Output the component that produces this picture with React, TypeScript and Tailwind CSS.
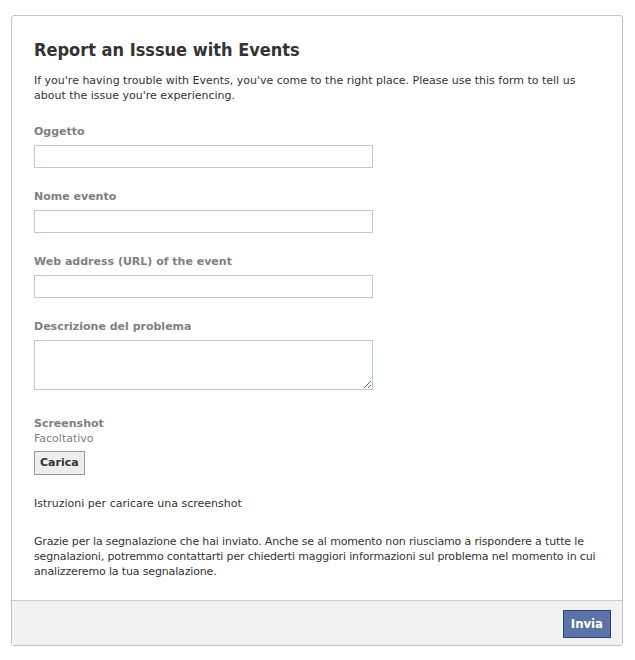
import React from 'react';

const font = { fontFamily: 'Tahoma, "DejaVu Sans", sans-serif' };
const titleFont = { fontFamily: 'Tahoma, "DejaVu Sans Condensed", "DejaVu Sans", sans-serif' };

const Field: React.FC<{ label: string; textarea?: boolean }> = ({ label, textarea = false }) => (
  <div className="mt-[22px]">
    <label className="block text-[11px] font-bold leading-[14px] text-[#808080]">{label}</label>
    {textarea ? (
      <textarea className="mt-[6px] block h-[50px] w-[339px] resize border border-[#bdc7d8] bg-white p-[3px] text-[11px] outline-none" />
    ) : (
      <input type="text" className="mt-[6px] block h-[23px] w-[339px] border border-[#bdc7d8] bg-white px-[3px] text-[11px] outline-none" />
    )}
  </div>
);

export default function App() {
  return (
    <div className="min-h-[660px] bg-white pl-[11px] pr-[12px] pt-[15px]" style={font}>
      <div className="overflow-hidden rounded-[3px] border border-[#c4c4c4] bg-white">
        <div className="px-[22px] pb-[21px] pt-[22px]">
          <h1 className="text-[18px] font-bold leading-[24px] text-[#333]" style={titleFont}>
            Report an Isssue with Events
          </h1>
          <p className="mt-[11px] text-[11px] leading-[15px] text-[#333]">
            If you're having trouble with Events, you've come to the right place. Please use this form to tell us about the issue you're experiencing.
          </p>

          <Field label="Oggetto" />
          <Field label="Nome evento" />
          <Field label="Web address (URL) of the event" />
          <Field label="Descrizione del problema" textarea />

          <div className="mt-[26px]">
            <div className="text-[11px] font-bold leading-[15px] text-[#808080]">Screenshot</div>
            <div className="text-[11px] leading-[15px] text-[#808080]">Facoltativo</div>
            <button className="mt-[5px] h-[24px] border border-[#999] bg-[#eee] px-[5px] text-[11px] font-bold text-[#333]">
              Carica
            </button>
          </div>

          <p className="mt-[21px] text-[11px] leading-[15px] text-[#333]">Istruzioni per caricare una screenshot</p>

          <p className="mt-[23px] text-[11px] leading-[15px] tracking-[-0.15px] text-[#333]">
            Grazie per la segnalazione che hai inviato. Anche se al momento non riusciamo a rispondere a tutte le segnalazioni, potremmo contattarti per chiederti maggiori informazioni sul problema nel momento in cui analizzeremo la tua segnalazione.
          </p>
        </div>

        <div className="flex h-[45px] items-start justify-end border-t border-[#ccc] bg-[#f2f2f2] pr-[11px] pt-[9px]">
          <button className="h-[28px] border border-[#29447e] bg-[#5b74a8] px-[7px] text-[13px] font-bold text-white" style={titleFont}>
            Invia
          </button>
        </div>
      </div>
    </div>
  );
}
